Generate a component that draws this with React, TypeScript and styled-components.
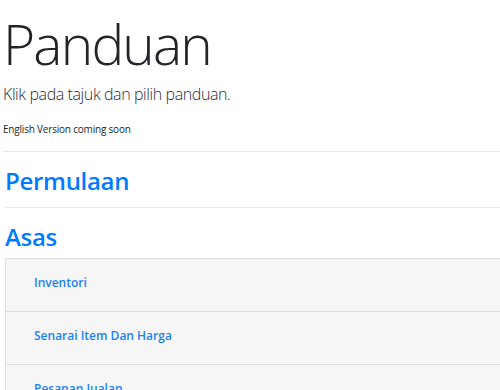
import React from "react";
import styled, { createGlobalStyle } from "styled-components";

const GlobalStyle = createGlobalStyle`
  html, body {
    margin: 0;
    padding: 0;
    background: #fff;
    overflow: hidden;
  }
  body {
    font-family: "Open Sans", "Noto Sans", sans-serif;
    color: #212529;
  }
`;

const Page = styled.div`
  width: 540px;
  padding: 10px 0 0 2px;
`;

const Header = styled.div`
  padding-left: 1px;
`;

const Title = styled.h1`
  margin: 0;
  font-size: 55px;
  font-weight: 300;
  line-height: 67px;
  letter-spacing: -1.8px;
  color: #212529;
`;

const Lead = styled.p`
  margin: 5px 0 0;
  font-size: 16px;
  font-weight: 300;
  line-height: 24px;
  letter-spacing: -0.4px;
  color: #2a2d3a;
`;

const Note = styled.p`
  margin: 16px 0 0;
  font-size: 10px;
  line-height: 14px;
  letter-spacing: -0.2px;
`;

const Rule = styled.hr<{ $gap?: number }>`
  margin: ${({ $gap }) => $gap ?? 14}px 0 0;
  border: 0;
  border-top: 1px solid #e9e9e9;
`;

const Section = styled.section`
  padding-left: 3px;
`;

const SectionTitle = styled.h2<{ $after?: number }>`
  margin: 14px 0 ${({ $after }) => $after ?? 0}px;
  font-size: 24px;
  font-weight: 600;
  line-height: 30px;
  letter-spacing: -0.3px;
  color: #007bff;
`;

const List = styled.div`
  border: 1px solid #dedede;
  border-right: 0;
  background: #f6f6f6;
`;

const Row = styled.div`
  height: 52px;
  box-sizing: border-box;
  padding: 11px 0 0 28px;
  & + & {
    border-top: 1px solid #dedede;
    height: 53px;
  }
`;

const RowLink = styled.a`
  font-size: 12px;
  font-weight: 600;
  line-height: 18px;
  color: #1a82f7;
  text-decoration: none;
`;

const items = ["Inventori", "Senarai Item Dan Harga", "Pesanan Jualan", "Pembelian"];

export default function App() {
  return (
    <>
      <GlobalStyle />
      <Page>
        <Header>
          <Title>Panduan</Title>
          <Lead>Klik pada tajuk dan pilih panduan.</Lead>
          <Note>English Version coming soon</Note>
        </Header>
        <Rule $gap={15} />
        <Section>
          <SectionTitle>Permulaan</SectionTitle>
          <Rule $gap={11} />
          <SectionTitle $after={6}>Asas</SectionTitle>
          <List>
            {items.map((item) => (
              <Row key={item}>
                <RowLink href="#">{item}</RowLink>
              </Row>
            ))}
          </List>
        </Section>
      </Page>
    </>
  );
}
